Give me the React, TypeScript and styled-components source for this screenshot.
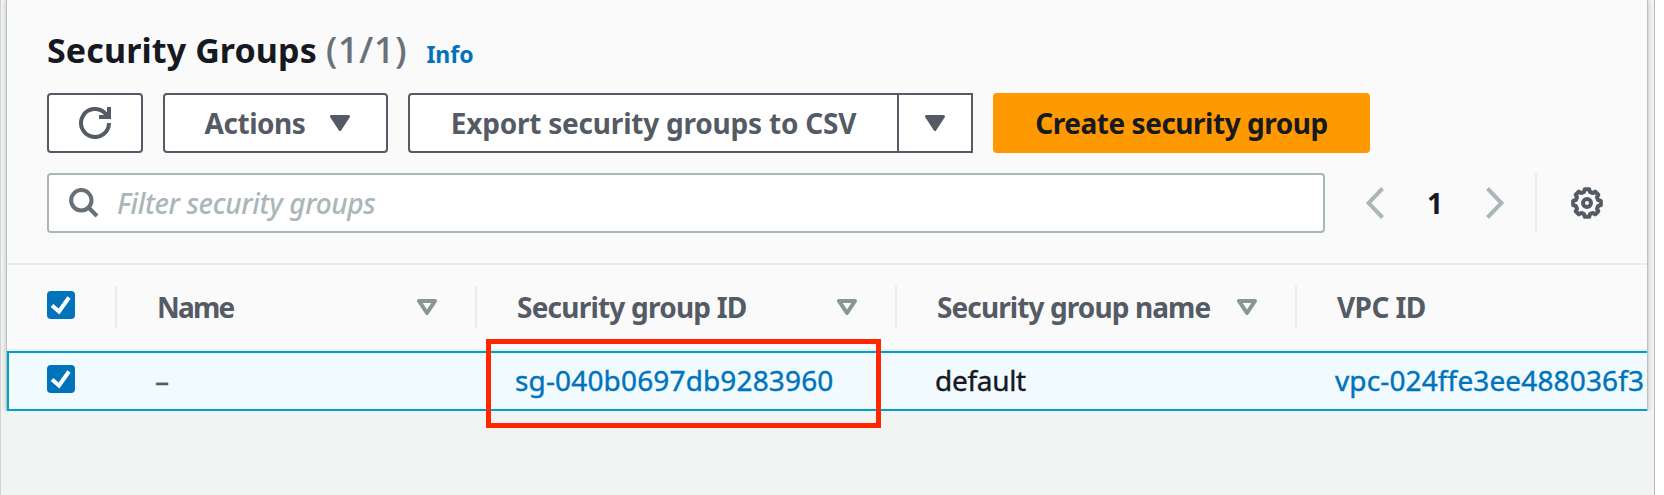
import React from "react";
import styled, { createGlobalStyle } from "styled-components";

const Global = createGlobalStyle`
  * { box-sizing: border-box; }
  html, body { margin: 0; background: #fff; }
  body { font-family: "Noto Sans", "Open Sans", sans-serif; overflow: hidden; }
`;

const Page = styled.div`
  display: flex;
  width: 1664px;
  height: 495px;
`;

const Frame = styled.main`
  width: 1655px;
  height: 495px;
  padding: 0 6px 0 5px;
  border-left: 1px solid #cfd3d3;
  border-right: 1px solid #b4bcbc;
  background: #f2f3f3;
`;

const Panel = styled.section`
  position: relative;
  isolation: isolate;
  height: 411px;
  border-left: 1px solid #b9c1c1;
  border-right: 1px solid #b9c1c1;
  background: #fafafa;

  &::before {
    content: "";
    position: absolute;
    z-index: -1;
    inset: 0 -1px;
    box-shadow: 0 0 5px rgba(0, 28, 36, 0.22);
    clip-path: inset(0 -4px 0 -4px);
  }
`;

const Header = styled.header`
  display: flex;
  flex-direction: column;
  height: 265px;
  padding: 0 43px 0 40px;
  border-bottom: 2px solid #eaeded;
`;

const Text = styled.span<{
  $size?: number;
  $gap?: number;
  $weight?: number;
  $color?: string;
  $stroke?: number;
}>`
  font-size: ${(p) => p.$size ?? 28}px;
  letter-spacing: ${(p) => p.$gap ?? 0}px;
  font-weight: ${(p) => p.$weight ?? 700};
  color: ${(p) => p.$color ?? "#545b64"};
  -webkit-text-stroke: ${(p) => p.$stroke ?? 0}px currentColor;
  white-space: pre;
`;

const Heading = styled.h1`
  display: flex;
  align-items: baseline;
  height: 93px;
  margin: 0;
  padding-top: 26px;
  line-height: 48px;
`;

const Count = styled(Text)`
  margin-left: 9px;
`;

const Info = styled(Text)`
  margin-left: 19px;
`;

const Buttons = styled.div`
  display: flex;
  gap: 20px;
  height: 60px;
`;

const Button = styled.button<{ $width: number; $primary?: boolean }>`
  display: flex;
  align-items: center;
  justify-content: center;
  width: ${(p) => p.$width}px;
  height: 60px;
  padding: 0;
  font-family: inherit;
  border: 2px solid ${(p) => (p.$primary ? "#ff9900" : "#545b64")};
  border-radius: 4px;
  background: ${(p) => (p.$primary ? "#ff9900" : "#fff")};
`;

const Split = styled.div`
  display: flex;
  & > :first-child { border-radius: 4px 0 0 4px; }
  & > :last-child { border-radius: 0; margin-left: -2px; }
`;

const FilterRow = styled.div`
  display: flex;
  align-items: center;
  height: 60px;
  margin-top: 20px;
`;

const FilterBox = styled.div`
  display: flex;
  align-items: center;
  width: 1278px;
  height: 60px;
  padding: 0 20px;
  border: 2px solid #aab7b8;
  border-radius: 4px;
  background: #fff;
`;

const Placeholder = styled(Text)`
  margin-left: 18px;
  font-style: italic;
`;

const Pager = styled.nav`
  display: flex;
  align-items: center;
  justify-content: space-between;
  width: 138px;
  margin-left: 41px;
`;

const Settings = styled.div`
  display: flex;
  align-items: center;
  justify-content: flex-end;
  width: 68px;
  height: 60px;
  margin-left: 31px;
  border-left: 2px solid #eaeded;
`;

const columns = "108px 360px 420px 400px 1fr";

const HeadRow = styled.div`
  display: grid;
  grid-template-columns: ${columns};
  align-items: center;
  height: 86px;
  border-bottom: 2px solid #eaeded;
`;

const HeadCell = styled.div`
  display: flex;
  align-items: center;
  justify-content: space-between;
  height: 42px;
  padding: 0 38px 0 40px;
  border-left: 2px solid #eaeded;
`;

const CheckCell = styled.div<{ $left: number }>`
  display: flex;
  padding: 0 0 4px ${(p) => p.$left}px;
`;

const BodyRow = styled.div`
  display: grid;
  grid-template-columns: ${columns};
  align-items: center;
  height: 60px;
  border: 2px solid #00a1c9;
  border-right: 0;
  background: #f1faff;
`;

const Cell = styled.div`
  position: relative;
  padding: 2px 0 0 38px;
  line-height: 38px;
`;

const Highlight = styled.div`
  position: absolute;
  left: 9px;
  top: -20px;
  width: 395px;
  height: 89px;
  border: 5px solid #ff2600;
`;

const Caret = ({ hollow = false }: { hollow?: boolean }) => (
  <svg width="20" height="16" viewBox="0 0 20 16" fill={hollow ? "none" : "#545b64"}>
    {hollow ? (
      <path d="M2 2H18L10 14Z" stroke="#879596" strokeWidth="4" strokeLinejoin="round" />
    ) : (
      <path d="M1.5 1.5H18.5L10 14.5Z" stroke="#545b64" strokeWidth="3" strokeLinejoin="round" />
    )}
  </svg>
);

const Check = () => (
  <svg width="28" height="28" viewBox="0 0 28 28">
    <rect width="28" height="28" rx="4" fill="#0073bb" />
    <path d="M5 14.5L12 20.5L22 6.5" fill="none" stroke="#fff" strokeWidth="4" />
  </svg>
);

const Refresh = () => (
  <svg width="32" height="32" viewBox="0 0 32 32" fill="none" stroke="#545b64" strokeWidth="4">
    <path d="M30 16A14 14 0 1 1 26 6.2L30 10" />
    <path d="M30 0V10H20" />
  </svg>
);

const Search = () => (
  <svg width="30" height="30" viewBox="0 0 30 30" fill="none" stroke="#687078" strokeWidth="4">
    <circle cx="12.3" cy="12.3" r="10.2" />
    <path d="M19.5 19.5L28 28" />
  </svg>
);

const Chevron = ({ next = false }: { next?: boolean }) => (
  <svg width="18" height="32" viewBox="0 0 18 32" fill="none" stroke="#aab7b8" strokeWidth="4">
    <path d={next ? "M1.5 1.5L15.5 16L1.5 30.5" : "M16.5 1.5L2.5 16L16.5 30.5"} />
  </svg>
);

const gearPath = Array.from({ length: 8 }, (_, i) => {
  const point = (radius: number, degrees: number) => {
    const angle = ((i * 45 + degrees) * Math.PI) / 180;
    return `${(16 + radius * Math.sin(angle)).toFixed(2)} ${(16 - radius * Math.cos(angle)).toFixed(2)}`;
  };
  return `${i ? "L" : "M"}${point(14, -9)}L${point(14, 9)}L${point(11.5, 15)}L${point(11.5, 30)}`;
}).join("") + "Z";

const Gear = () => (
  <svg width="32" height="32" viewBox="0 0 32 32" fill="none" stroke="#545b64" strokeWidth="4" strokeLinejoin="round">
    <path d={gearPath} />
    <circle cx="16" cy="16" r="4" />
  </svg>
);

const HeadLabel = ({ text, gap, sortable = true }: { text: string; gap: number; sortable?: boolean }) => (
  <HeadCell>
    <Text $gap={gap}>{text}</Text>
    {sortable && <Caret hollow />}
  </HeadCell>
);

const ActionLabel = styled(Text)`
  margin: 0 25px 0 4px;
`;

export default function App() {
  return (
    <Page>
      <Global />
      <Frame>
        <Panel>
          <Header>
            <Heading>
              <Text $size={34} $gap={0.12} $color="#16191f">Security Groups</Text>
              <Count $size={36} $gap={0.8} $weight={500} $stroke={0.2} $color="#687078">(1/1)</Count>
              <Info $size={23} $color="#0073bb">Info</Info>
            </Heading>
            <Buttons>
              <Button $width={96}><Refresh /></Button>
              <Button $width={225}>
                <ActionLabel $gap={-0.45}>Actions</ActionLabel>
                <Caret />
              </Button>
              <Split>
                <Button $width={491}><Text $gap={-0.21}>Export security groups to CSV</Text></Button>
                <Button $width={76}><Caret /></Button>
              </Split>
              <Button $width={377} $primary>
                <Text $gap={-0.48} $color="#16191f">Create security group</Text>
              </Button>
            </Buttons>
            <FilterRow>
              <FilterBox>
                <Search />
                <Placeholder $gap={-0.35} $weight={500} $color="#aab7b8">Filter security groups</Placeholder>
              </FilterBox>
              <Pager>
                <Chevron />
                <Text $color="#16191f">1</Text>
                <Chevron next />
              </Pager>
              <Settings><Gear /></Settings>
            </FilterRow>
          </Header>
          <HeadRow>
            <CheckCell $left={40}><Check /></CheckCell>
            <HeadLabel text="Name" gap={-1.8} />
            <HeadLabel text="Security group ID" gap={-0.78} />
            <HeadLabel text="Security group name" gap={-0.9} />
            <HeadLabel text="VPC ID" gap={-0.6} sortable={false} />
          </HeadRow>
          <BodyRow>
            <CheckCell $left={38}><Check /></CheckCell>
            <Cell><Text $weight={400} $stroke={0.4}>–</Text></Cell>
            <Cell>
              <Text $weight={400} $stroke={0.4} $gap={0.15} $color="#0073bb">sg-040b0697db9283960</Text>
              <Highlight />
            </Cell>
            <Cell><Text $weight={400} $stroke={0.4} $gap={-0.3} $color="#16191f">default</Text></Cell>
            <Cell><Text $weight={400} $stroke={0.4} $gap={0.13} $color="#0073bb">vpc-024ffe3ee488036f3</Text></Cell>
          </BodyRow>
        </Panel>
      </Frame>
    </Page>
  );
}
